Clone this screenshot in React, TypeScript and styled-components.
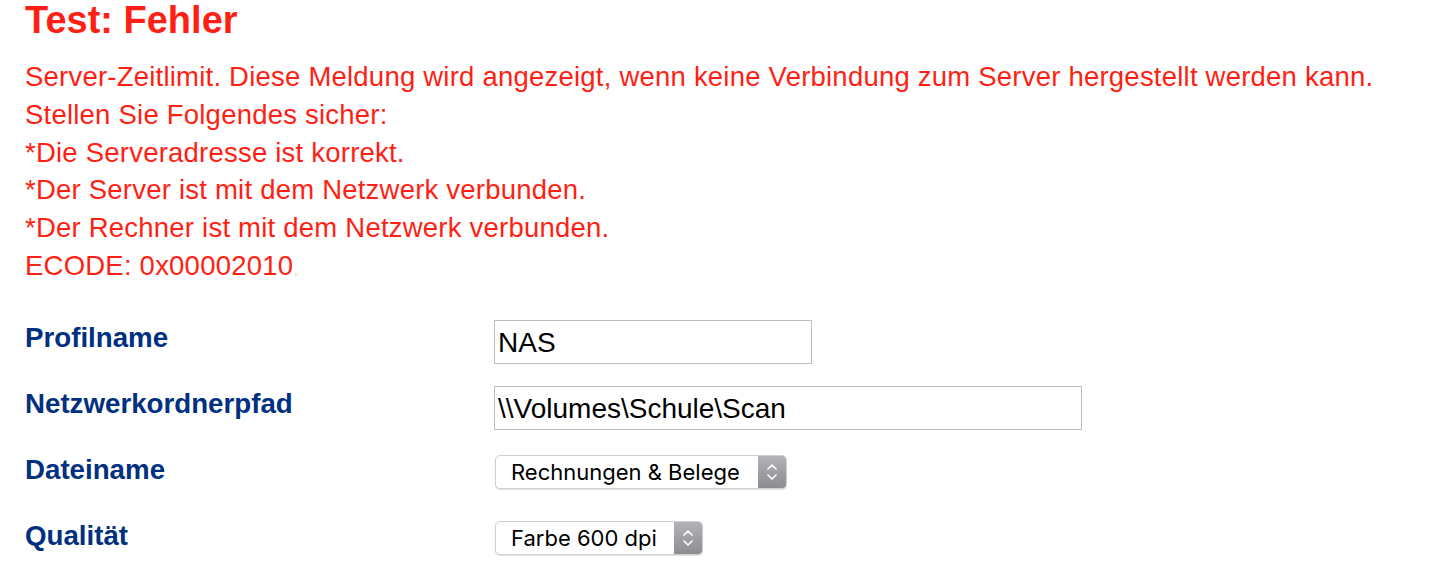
import React from "react";
import styled, { createGlobalStyle } from "styled-components";

const Global = createGlobalStyle`
  html, body { margin: 0; padding: 0; background: #ffffff; }
  body { font-family: "Liberation Sans", Arial, sans-serif; }
`;

const Page = styled.div`
  padding: 1px 0 0 25px;
  width: 1413px;
  box-sizing: border-box;
`;

const Title = styled.h1`
  margin: 0;
  font-size: 38px;
  line-height: 38px;
  font-weight: 700;
  color: #ff1f14;
`;

const Message = styled.div`
  margin-top: 19px;
  font-size: 27.5px;
  letter-spacing: 0.22px;
  line-height: 37.8px;
  color: #ff1f14;
`;

const Line = styled.div`
  white-space: nowrap;
`;

const Mark = styled.span`
  color: #f3b98f;
  font-size: 12px;
  margin-left: 1px;
`;

const Form = styled.div`
  margin-top: 18px;
  display: flex;
  flex-direction: column;
`;

const Row = styled.div`
  display: grid;
  grid-template-columns: 469px auto;
  align-items: center;
  height: 66px;
`;

const Label = styled.div`
  font-size: 27.7px;
  font-weight: 700;
  color: #00307f;
  margin-top: -7px;
`;

const TextField = styled.div<{ $w: number }>`
  width: ${(p) => p.$w}px;
  height: 44px;
  box-sizing: border-box;
  border: 1px solid #bebebe;
  padding: 3px 3px 0;
  display: flex;
  align-items: center;
  font-size: 28px;
  color: #000;
`;

const Select = styled.div<{ $w: number }>`
  margin: -3px 0 0 1px;
  width: ${(p) => p.$w}px;
  height: 34px;
  box-sizing: border-box;
  border: 1px solid #d0d0d0;
  border-radius: 5px;
  box-shadow: 0 1px 1px rgba(0, 0, 0, 0.12);
  display: flex;
  align-items: stretch;
  overflow: hidden;
  background: #fff;
`;

const SelectText = styled.div`
  flex: 1;
  padding-left: 15px;
  display: flex;
  align-items: center;
  font-family: Inter, "Liberation Sans", sans-serif;
  font-size: 22px;
  color: #000;
`;

const Stepper = styled.div`
  width: 28px;
  background: linear-gradient(#b3b3b7, #8c8c91);
  display: flex;
  align-items: center;
  justify-content: center;
`;

const StepIcon = () => (
  <svg width="14" height="22" viewBox="0 0 14 22">
    <path d="M3 8 L7 4 L11 8" fill="none" stroke="#fff" strokeWidth="1.7" strokeLinecap="round" strokeLinejoin="round" />
    <path d="M3 14 L7 18 L11 14" fill="none" stroke="#fff" strokeWidth="1.7" strokeLinecap="round" strokeLinejoin="round" />
  </svg>
);

export default function App() {
  return (
    <Page>
      <Global />
      <Title>Test: Fehler</Title>
      <Message>
        <Line>Server-Zeitlimit. Diese Meldung wird angezeigt, wenn keine Verbindung zum Server hergestellt werden kann.</Line>
        <Line>Stellen Sie Folgendes sicher:</Line>
        <Line>*Die Serveradresse ist korrekt.</Line>
        <Line>*Der Server ist mit dem Netzwerk verbunden.</Line>
        <Line>*Der Rechner ist mit dem Netzwerk verbunden.</Line>
        <Line>ECODE: 0x00002010<Mark>,</Mark></Line>
      </Message>
      <Form>
        <Row>
          <Label>Profilname</Label>
          <TextField $w={318}>NAS</TextField>
        </Row>
        <Row>
          <Label>Netzwerkordnerpfad</Label>
          <TextField $w={588}>\\Volumes\Schule\Scan</TextField>
        </Row>
        <Row>
          <Label>Dateiname</Label>
          <Select $w={292}>
            <SelectText>Rechnungen &amp; Belege</SelectText>
            <Stepper><StepIcon /></Stepper>
          </Select>
        </Row>
        <Row>
          <Label>Qualität</Label>
          <Select $w={208}>
            <SelectText>Farbe 600 dpi</SelectText>
            <Stepper><StepIcon /></Stepper>
          </Select>
        </Row>
      </Form>
    </Page>
  );
}
